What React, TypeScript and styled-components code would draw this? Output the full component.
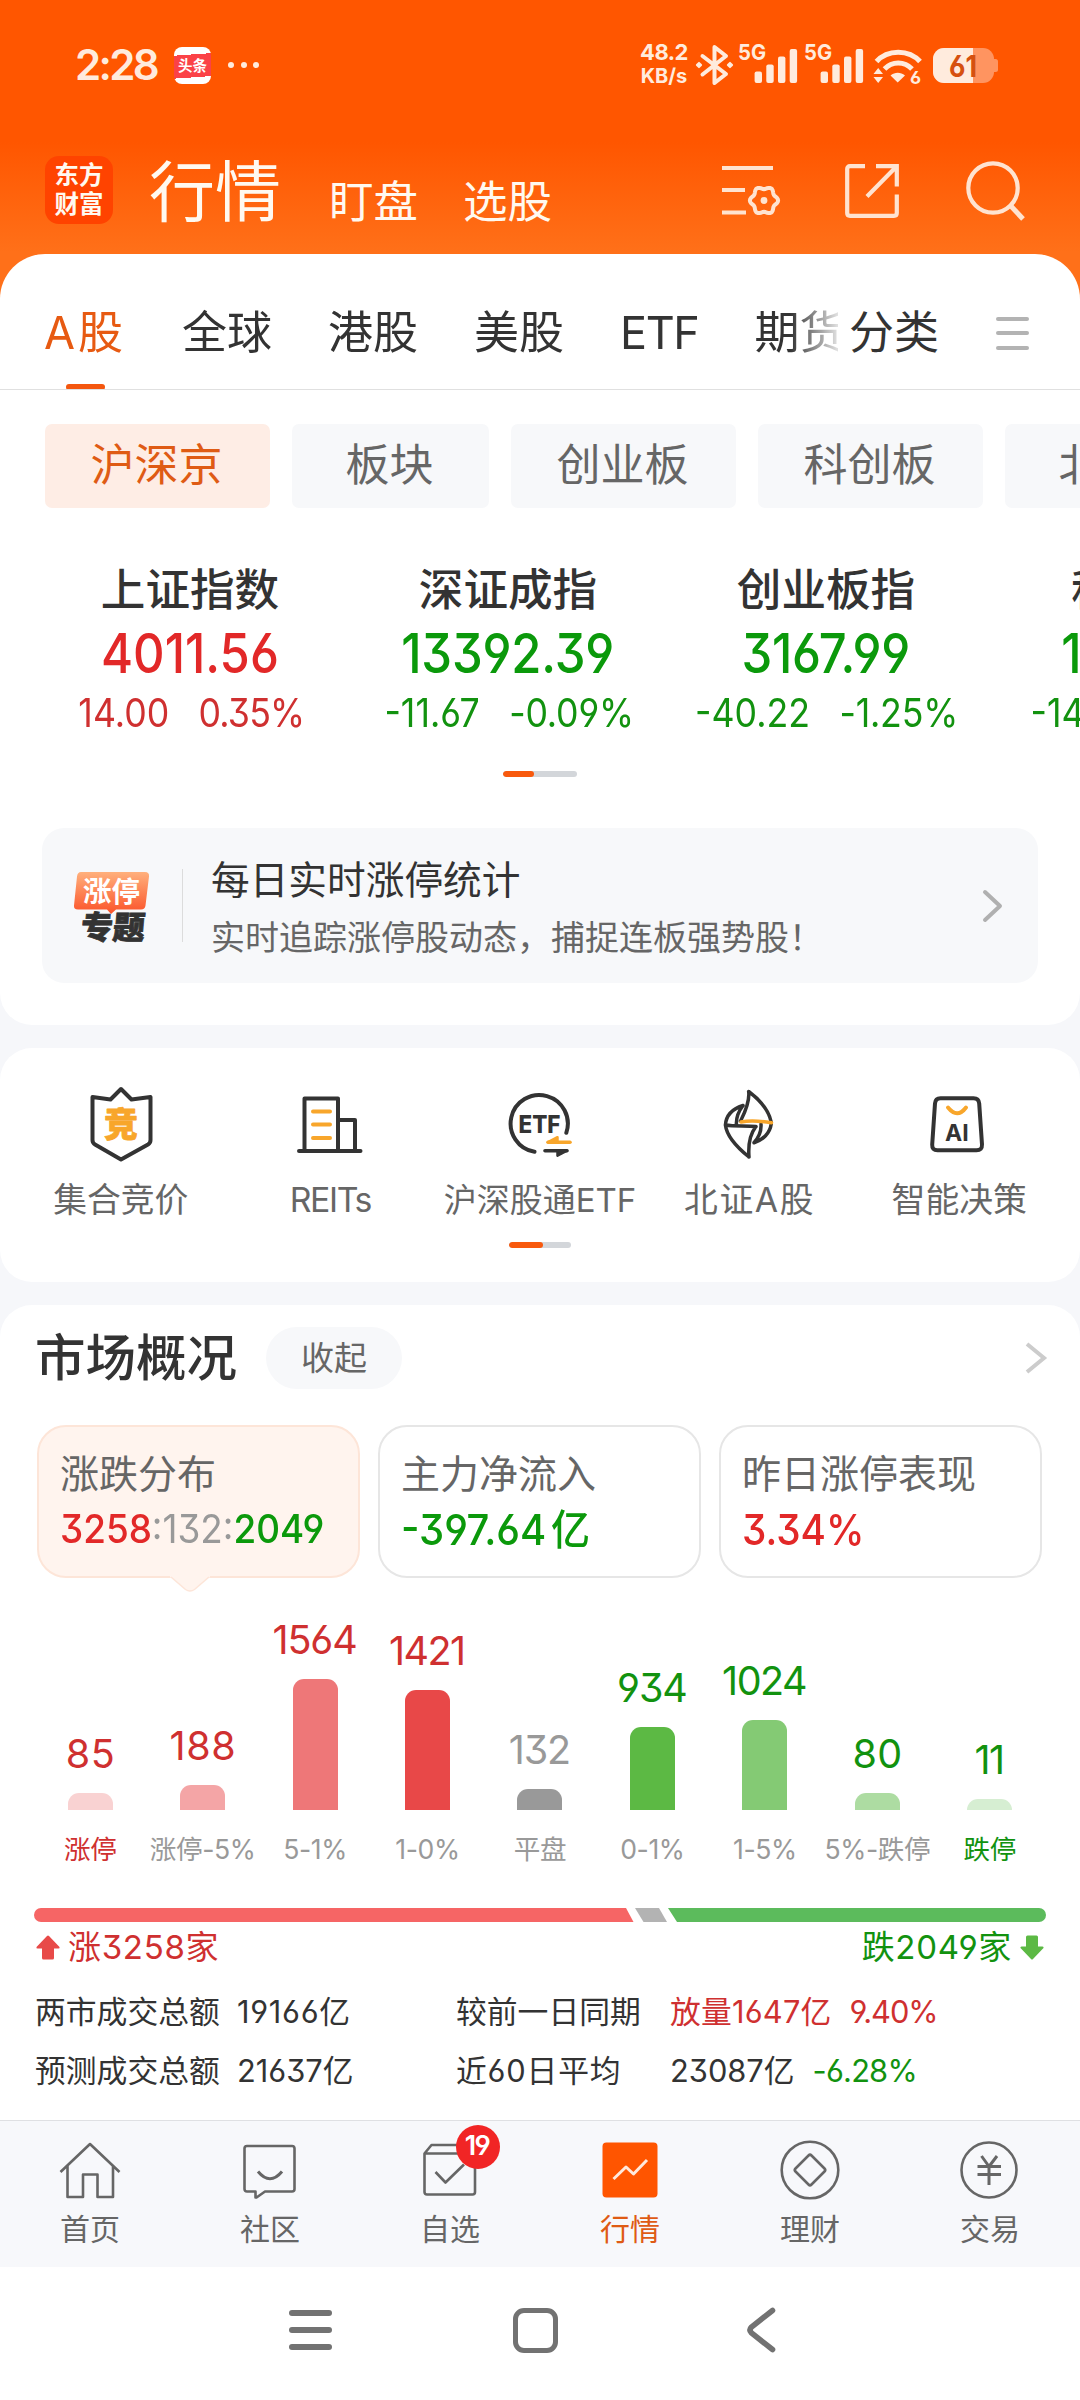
import React from "react";
import styled, { createGlobalStyle, css } from "styled-components";

const c = {
  ink: "#333333",
  sub: "#666666",
  mute: "#999999",
  red: "#e22828",
  redSoft: "#cf3030",
  green: "#0b990b",
  greenSoft: "#12920f",
  brand: "#ff5500",
  brandText: "#e75a12",
  panel: "#ffffff",
  canvas: "#f6f7fa",
  fog: "#f7f8fa",
  cream: "#ffebdd",
};

const GlobalStyle = createGlobalStyle`
  * { box-sizing: border-box; }
  body {
    margin: 0;
    background: ${c.canvas};
    color: ${c.ink};
    font-family: Inter, "Noto Sans CJK SC", sans-serif;
    font-feature-settings: "cv03", "cv04", "cv09";
    white-space: nowrap;
  }
  svg { display: block; flex: none; overflow: visible; }
  svg text { font-family: Inter, "Noto Sans CJK SC", sans-serif; }
`;

const Screen = styled.div`
  width: 1080px;
  height: 2400px;
  overflow: hidden;
  display: flex;
  flex-direction: column;
  background: linear-gradient(#ff5600 0, #ff5600 142px, #ff7019 252px, #ff7019 320px) no-repeat 0 0 / 100% 320px, ${c.canvas};
`;

/* ---------- status bar ---------- */

const StatusBar = styled.div`
  height: 130px;
  flex: none;
  display: flex;
  align-items: center;
  padding: 0 81px 0 75px;
  color: ${c.cream};
`;

const Clock = styled.div`
  font-size: 42px;
  font-weight: 600;
  line-height: 60px;
  letter-spacing: -2.7px;
  width: 99px;
`;

const NewsBadge = styled.div`
  width: 37px;
  height: 37px;
  border-radius: 8px;
  background: linear-gradient(176deg, #fff 0 22%, #fb4247 22% 80%, #fff 80%);
  color: #fff;
  font-size: 14.5px;
  font-weight: 700;
  line-height: 37px;
  text-align: center;
`;

const Dots = styled.div`
  display: flex;
  gap: 6.5px;
  margin-left: 17px;
  & > i { width: 6px; height: 6px; border-radius: 3px; background: ${c.cream}; }
`;

const StatusIcons = styled.div`
  margin-left: auto;
  display: flex;
  align-items: center;
`;

const NetSpeed = styled.div`
  width: 48px;
  text-align: center;
  font-size: 22px;
  font-weight: 700;
  line-height: 24px;
  letter-spacing: -0.5px;
  margin: -2px 8px 0 0;
  & > span { display: block; font-size: 20px; letter-spacing: 0; }
`;

/* ---------- title bar ---------- */

const TitleBar = styled.div`
  height: 124px;
  flex: none;
  display: flex;
  align-items: center;
  padding: 0 55px 0 45px;
  color: #fff9f0;
`;

const Logo = styled.div`
  width: 68px;
  height: 68px;
  margin-top: -4px;
  border-radius: 14px;
  background: #ff4300;
  padding-top: 5px;
  text-align: center;
  font-size: 24.5px;
  font-weight: 700;
  line-height: 29px;
`;

const PageTitle = styled.div`
  font-size: 66px;
  line-height: 100px;
  margin-left: 36px;
`;

const TitleLink = styled.div<{ $gap: number }>`
  font-size: 44.5px;
  line-height: 60px;
  margin: 20px 0 0 ${(p) => p.$gap}px;
`;

const TitleIcons = styled.div`
  margin: -3px 0 0 auto;
  display: flex;
  align-items: center;
`;

/* ---------- panels ---------- */

const Panel = styled.section<{ $h: number; $radius: string }>`
  flex: none;
  height: ${(p) => p.$h}px;
  border-radius: ${(p) => p.$radius};
  background: ${c.panel};
  overflow: hidden;
  & + & { margin-top: 23px; }
`;

const TabRow = styled.div`
  display: flex;
  align-items: center;
  height: 136px;
  padding: 23px 51px 0 0;
  border-bottom: 1px solid #e0e0e0;
  font-size: 45px;
  line-height: 66px;
`;

const TabScroller = styled.div`
  display: flex;
  align-items: center;
  gap: 56px;
  width: 838px;
  height: 112px;
  padding-left: 44px;
  overflow: hidden;
  mask-image: linear-gradient(to right, #000 790px, transparent 846px);
`;

const Tab = styled.div<{ $active?: boolean; $ls?: number }>`
  position: relative;
  flex: none;
  letter-spacing: ${(p) => p.$ls ?? 0}px;
  ${(p) =>
    p.$active &&
    css`
      color: ${c.brandText};
      width: 82px;
      &::after {
        content: "";
        position: absolute;
        left: 22px;
        bottom: -24px;
        width: 39px;
        height: 6px;
        border-radius: 3px;
        background: #f4570f;
      }
    `}
`;

const Classify = styled.div`
  margin-left: 11px;
`;

const MenuLines = styled.div`
  margin-left: auto;
  width: 33px;
  display: grid;
  gap: 10.5px;
  & > i { height: 4px; border-radius: 2px; background: #b3b3b3; }
`;

const ChipRow = styled.div`
  display: flex;
  gap: 22px;
  margin: 34px 0 0 45px;
`;

const Chip = styled.div<{ $active?: boolean }>`
  flex: none;
  height: 84px;
  padding: 0 47.5px 0 45.5px;
  min-width: 197px;
  text-align: center;
  border-radius: 7px;
  font-size: 44px;
  line-height: 83px;
  background: ${(p) => (p.$active ? "#feede5" : c.fog)};
  color: ${(p) => (p.$active ? "#df5b14" : c.sub)};
`;

const IndexRow = styled.div`
  display: flex;
  margin: 49px 0 0 31px;
`;

const IndexCard = styled.div<{ $up?: boolean }>`
  flex: none;
  width: 318px;
  display: flex;
  flex-direction: column;
  align-items: center;
  color: ${(p) => (p.$up ? c.red : c.green)};
`;

const IndexName = styled.div`
  font-size: 44.6px;
  font-weight: 500;
  line-height: 66px;
  height: 64px;
  color: ${c.ink};
`;

const IndexValue = styled.div<{ $ls: number }>`
  font-size: 55px;
  font-weight: 500;
  line-height: 64px;
  letter-spacing: ${(p) => p.$ls}px;
  transform: scaleX(0.89);
`;

const IndexChange = styled.div<{ $up?: boolean }>`
  display: flex;
  gap: 32px;
  margin-left: 2px;
  font-size: 39px;
  line-height: 55px;
  transform: scaleX(0.916);
  color: ${(p) => (p.$up ? c.redSoft : c.greenSoft)};
  & > span:last-child { letter-spacing: ${(p) => (p.$up ? -0.9 : -0.2)}px; }
`;

const Pager = styled.div<{ $top: number; $w: number; $on: number }>`
  width: ${(p) => p.$w}px;
  height: 6px;
  border-radius: 3px;
  margin: ${(p) => p.$top}px auto 0;
  background: #d3d6da;
  overflow: hidden;
  &::before {
    content: "";
    display: block;
    width: ${(p) => p.$on}px;
    height: 6px;
    border-radius: 3px;
    background: #f8590d;
  }
`;

const Banner = styled.div`
  display: flex;
  align-items: center;
  height: 155px;
  margin: 51px 42px 0;
  padding: 0 35px 0 31px;
  border-radius: 22px;
  background: ${c.fog};
`;

const BannerRule = styled.div`
  width: 1px;
  height: 73px;
  margin: 0 28px 0 32px;
  background: #dcdcdc;
`;

const BannerText = styled.div`
  flex: 1;
  padding-top: 8px;
`;

const BannerTitle = styled.div`
  font-size: 38.7px;
  line-height: 56px;
`;

const BannerNote = styled.div`
  font-size: 34px;
  line-height: 59px;
  color: ${c.sub};
`;

/* ---------- shortcuts ---------- */

const ShortcutGrid = styled.div`
  display: grid;
  grid-template-columns: repeat(5, 1fr);
  padding: 36px 16px 0;
`;

const Shortcut = styled.div<{ $size?: number; $ls?: number }>`
  display: flex;
  flex-direction: column;
  align-items: center;
  font-size: ${(p) => p.$size ?? 33.8}px;
  letter-spacing: ${(p) => p.$ls ?? 0}px;
  line-height: 48px;
  gap: 12px;
  color: ${c.sub};
`;

/* ---------- market overview ---------- */

const OverviewHead = styled.div`
  display: flex;
  align-items: center;
  height: 62px;
  margin: 22px 33px 0 35px;
`;

const OverviewTitle = styled.h2`
  margin: 0;
  width: 231px;
  font-size: 50.5px;
  font-weight: 500;
  line-height: 64px;
`;

const FoldButton = styled.div`
  width: 136px;
  height: 62px;
  border-radius: 31px;
  background: ${c.fog};
  color: ${c.sub};
  font-size: 33px;
  line-height: 62px;
  text-align: center;
  margin-right: auto;
`;

const CardRow = styled.div`
  display: grid;
  grid-template-columns: repeat(3, 323px);
  gap: 18px;
  margin: 36px 0 0 37px;
`;

const MetricCard = styled.div<{ $active?: boolean }>`
  position: relative;
  height: 153px;
  border: 2px solid ${(p) => (p.$active ? "#fde5d8" : "#e6e6e6")};
  border-radius: 29px;
  padding: 22px 22px 0 21px;
  background: ${(p) => (p.$active ? "#fff4ee" : "#fff")};
  & > svg { position: absolute; left: 131px; top: 149px; }
`;

const MetricLabel = styled.div`
  font-size: 39px;
  line-height: 50px;
  color: ${c.sub};
`;

const MetricValue = styled.div<{ $color: string; $size: number; $sx: number }>`
  display: inline-block;
  margin-top: 2px;
  font-size: ${(p) => p.$size}px;
  font-weight: 500;
  line-height: 56px;
  color: ${(p) => p.$color};
  transform: scaleX(${(p) => p.$sx});
  transform-origin: 0 50%;
`;

const Flat = styled.span`
  color: ${c.mute};
  font-weight: 400;
`;

const Down = styled.span`
  color: ${c.green};
`;

const Unit = styled.span`
  margin-left: 5px;
  font-size: 42px;
`;

const Histogram = styled.div`
  display: grid;
  grid-template-columns: repeat(9, 112.45px);
  height: 291px;
  margin-left: 34px;
`;

const BarColumn = styled.div<{ $color: string }>`
  display: flex;
  flex-direction: column;
  justify-content: flex-end;
  align-items: center;
  color: ${(p) => p.$color};
`;

const BarCount = styled.div<{ $ls: number }>`
  font-size: 39.5px;
  line-height: 40px;
  letter-spacing: ${(p) => p.$ls}px;
  margin-right: ${(p) => -p.$ls}px;
`;

const Bar = styled.div<{ $fill: string }>`
  width: 45px;
  margin-top: 19px;
  border-radius: 11px 11px 0 0;
  background: ${(p) => p.$fill};
`;

const BarLabel = styled.div<{ $strong?: boolean }>`
  margin-top: 19px;
  font-size: 26.6px;
  letter-spacing: -0.4px;
  line-height: 40px;
  color: ${(p) => (p.$strong ? "inherit" : c.mute)};
`;

const Balance = styled.div`
  margin: 39px 0 0 34px;
`;

const Totals = styled.div`
  display: flex;
  justify-content: space-between;
  height: 50px;
  margin: 0 36px;
  font-size: 33px;
  letter-spacing: 0.7px;
  line-height: 50px;
`;

const Side = styled.div<{ $color: string }>`
  display: flex;
  align-items: center;
  gap: 8px;
  color: ${(p) => p.$color};
`;

const Stats = styled.div`
  display: grid;
  grid-template-columns: 202px 219px 214px 1fr;
  grid-auto-rows: 58.5px;
  margin: 11px 0 0 35px;
  font-size: 30.8px;
  line-height: 58px;
`;

const StatLabel = styled.div<{ $ls?: number }>`
  letter-spacing: ${(p) => p.$ls ?? 0}px;
`;

const StatValue = styled.div<{ $color?: string; $ls?: number }>`
  display: flex;
  gap: 18px;
  letter-spacing: ${(p) => p.$ls ?? 0}px;
  color: ${(p) => p.$color ?? c.ink};
`;

const Percent = styled.span<{ $color: string; $ls: number }>`
  color: ${(p) => p.$color};
  letter-spacing: ${(p) => p.$ls}px;
`;

/* ---------- bottom bars ---------- */

const TabBar = styled.nav`
  flex: none;
  display: grid;
  grid-template-columns: repeat(6, 1fr);
  height: 147px;
  border-top: 1px solid #dfe0e3;
  background: #f7f8fb;
`;

const NavItem = styled.div<{ $active?: boolean }>`
  position: relative;
  display: flex;
  flex-direction: column;
  align-items: center;
  gap: 11px;
  padding-top: 19px;
  font-size: 30px;
  line-height: 36px;
  color: ${(p) => (p.$active ? "#df5b14" : c.sub)};
`;

const Badge = styled.div`
  position: absolute;
  left: 96px;
  top: 4px;
  width: 44px;
  height: 44px;
  border-radius: 22px;
  background: #f12525;
  color: #fff;
  font-size: 27px;
  font-weight: 600;
  letter-spacing: -1.5px;
  line-height: 42px;
  padding-right: 2px;
  text-align: center;
`;

const SystemNav = styled.div`
  flex: none;
  display: flex;
  align-items: center;
  height: 133px;
  padding: 0 0 7px 289px;
  background: #fff;
`;

const RecentLines = styled.div`
  width: 43px;
  display: grid;
  gap: 11px;
  & > i { height: 6px; border-radius: 3px; background: #727272; }
`;

const HomeSquare = styled.div`
  width: 45px;
  height: 45px;
  margin: 0 189px 0 181px;
  border: 5.5px solid #727272;
  border-radius: 11px;
`;

/* ---------- drawings ---------- */

const Bluetooth = () => (
  <svg width="37" height="42" viewBox="0 0 37 42" fill="none" stroke={c.cream} strokeWidth="4" strokeLinecap="round" strokeLinejoin="round">
    <path d="M6.5 12 30 30 18.5 39V3L30 12 6.5 30.5" />
    <g fill={c.cream} stroke="none">
      <rect x="0.5" y="18.5" width="5" height="5" rx="1" transform="rotate(45 3 21)" />
      <rect x="31.5" y="18.5" width="5" height="5" rx="1" transform="rotate(45 34 21)" />
    </g>
  </svg>
);

const SignalSvg = styled.svg<{ $ml: number }>`
  margin-left: ${(p) => p.$ml}px;
`;

const Signal = ({ ml }: { ml: number }) => (
  <SignalSvg $ml={ml} width="60" height="42" viewBox="0 0 60 42" fill={c.cream}>
    <text x="0" y="16" fontSize="22" fontWeight="700" textLength="28" lengthAdjust="spacingAndGlyphs">5G</text>
    {[27.5, 20.5, 12.5, 5].map((y, i) => (
      <rect key={y} x={16.6 + i * 11.7} y={y} width="7.4" height={39 - y} rx="2" />
    ))}
  </SignalSvg>
);

const WifiSvg = styled.svg`
  margin-left: 9px;
`;

const Wifi = () => (
  <WifiSvg width="50" height="42" viewBox="0 0 50 42" fill="none" stroke={c.cream} strokeWidth="5">
    <path d="M3.5 17.5C14.5 5 36 5 47 17.5M11.5 25C19 17 31.5 17 39 25" />
    <g fill={c.cream} stroke="none">
      <path d="M17.5 31.5c4.5-3.6 10-3.6 14.5 0L24.7 38.5zM5.2 24 10 30H.5zM.5 33H10l-4.8 6z" />
      <text x="37" y="40" fontSize="18" fontWeight="700">6</text>
    </g>
  </WifiSvg>
);

const BatterySvg = styled.svg`
  margin-left: 10px;
`;

const Battery = () => (
  <BatterySvg width="66" height="35" viewBox="0 0 66 35">
    <rect width="61" height="35" rx="11" fill="#ff9460" />
    <path d="M11 0H40V35H11A11 11 0 0 1 0 24V11A11 11 0 0 1 11 0Z" fill={c.cream} />
    <path d="M61 11h1.5q2.500 0 2.500 2.500v8q0 2.500-2.500 2.500H61z" fill="#ff9460" />
    <text x="16" y="28.500" fontSize="30" fontWeight="700" fill="#d6500f" textLength="28" lengthAdjust="spacingAndGlyphs">61</text>
  </BatterySvg>
);

const gearPath =
  Array.from({ length: 73 }, (_, i) => {
    const a = (i * 5 * Math.PI) / 180;
    const r = 12.7 + 1.4 * Math.cos(6 * a);
    return `${i ? "L" : "M"}${(42 + r * Math.cos(a)).toFixed(2)} ${(37.5 + r * Math.sin(a)).toFixed(2)}`;
  }).join("") + "Z";

const HeaderIcon = styled.svg<{ $gap?: number }>`
  margin-left: ${(p) => p.$gap ?? 0}px;
  fill: none;
  stroke: #ffe3d0;
  stroke-width: 4.2px;
`;

const ListGear = () => (
  <HeaderIcon width="60" height="56" viewBox="0 0 60 56">
    <path d="M0 5H51M0 27H23M0 49.500H24" />
    <path d={gearPath} strokeWidth="4" strokeLinejoin="round" />
    <circle cx="42" cy="37.500" r="3.400" fill="#ffe3d0" stroke="none" />
  </HeaderIcon>
);

const ShareOut = () => (
  <HeaderIcon $gap={63} width="54" height="54" viewBox="0 0 54 54">
    <path d="M20 2.200H5Q2.200 2.200 2.200 5V49Q2.200 51.800 5 51.800H49Q51.800 51.800 51.800 49V30.500M31 2.200H51.800V22.500M51 3 22 32.500" />
  </HeaderIcon>
);

const Search = () => (
  <HeaderIcon $gap={67} width="59" height="59" viewBox="0 0 59 59">
    <circle cx="27" cy="27" r="24.700" />
    <path d="M44 44 57 58" strokeWidth="5" />
  </HeaderIcon>
);

const Chevron = ({ color, w, round }: { color: string; w: number; round?: boolean }) => (
  <svg width={w} height="34" viewBox={`0 0 ${w} 34`} fill="none" stroke={color} strokeWidth="4" strokeLinecap={round ? "round" : "butt"} strokeLinejoin={round ? "round" : "miter"}>
    <path d={`M2 3 ${w - 3} 17 2 31`} />
  </svg>
);

const TopicMark = () => (
  <svg width="77" height="72" viewBox="0 0 77 72">
    <defs>
      <linearGradient id="topic" x1="0" y1="0" x2="0" y2="1">
        <stop offset="0" stopColor="#ffb07c" />
        <stop offset="1" stopColor="#fb5329" />
      </linearGradient>
    </defs>
    <path d="M8 2H72Q76.500 2 76 6.500L72.500 35.500Q72 39.500 68 39.500H43L38 44 34 39.500H5Q.5 39.500 1 35.500L4 6.500Q4.500 2 8 2Z" fill="url(#topic)" />
    <text x="10" y="31.500" fontSize="28.500" fontWeight="700" fill="#fff">涨停</text>
    <text x="13" y="69.500" fontSize="32" fontWeight="900" fill={c.ink} stroke={c.ink} strokeWidth="0.8" transform="skewX(-5)">专题</text>
  </svg>
);

const ShortcutIcon = styled.svg.attrs({ width: 80, height: 80, viewBox: "0 0 80 80" })`
  fill: none;
  stroke: ${c.ink};
  stroke-width: 4px;
  stroke-linecap: round;
  stroke-linejoin: round;
`;

const amber = "#f8a62b";

const AuctionIcon = () => (
  <ShortcutIcon>
    <path d="M11.500 13 29.500 15.500 40 5 50.500 15.500 69.500 13V56Q69.500 59 67 60.500L40 75.500 14 60.500Q11.500 59 11.500 56Z" />
    <text x="23" y="53" fontSize="34" fontWeight="900" fill={amber} stroke={amber} strokeWidth="0.8">竞</text>
  </ShortcutIcon>
);

const ReitsIcon = () => (
  <ShortcutIcon>
    <path d="M9 67H70.500M14.500 67V14.500H48V67M48 36H65V67" />
    <path d="M23 27.500H40M23 40.500H40M23 54H40" stroke={amber} />
  </ShortcutIcon>
);

const EtfIcon = () => (
  <ShortcutIcon>
    <path d="M66.300 48.800A28.600 28.600 0 1 0 34.500 67.800" />
    <text x="18.500" y="49" fontSize="24" fontWeight="800" fill={c.ink} stroke="none" textLength="42" lengthAdjust="spacingAndGlyphs">ETF</text>
    <g strokeWidth="3.600">
      <path d="M70 58.200H48" stroke={amber} />
      <path d="M57.500 53.200V58.200H48Z" stroke={amber} fill={amber} strokeWidth="2.500" />
      <path d="M45 66.700H67" />
      <path d="M57.500 71.700V66.700H67Z" fill={c.ink} strokeWidth="2.500" />
    </g>
  </ShortcutIcon>
);

const NorthIcon = () => (
  <ShortcutIcon>
    <g strokeWidth="3.500">
      <path d="M38.700 7.500C50 16 59 27 61.200 38M38.700 7.500C40 19 34 30 30.500 37M33 21.500C22 25 16 32 15.400 41M33 21.500C28 28 26 33 26.400 40.500M15.400 41C25 42.500 35 41.500 46 42.500M46 42.500C40 50 38 60 39 73M15.400 41C17 54 29 65 39 73M61.200 40C60 49 53 56 44 58.700 49 53 51.500 47 51 40" />
      <path d="M31 38C41 36 51 37 61.500 38.800" stroke={amber} />
    </g>
  </ShortcutIcon>
);

const AiIcon = () => (
  <ShortcutIcon>
    <path d="M21.500 14.200H54.500Q59.800 14.200 60.200 19.500L63 60.500Q63.300 66.200 57.500 66.200H18.500Q12.900 66.200 13.200 60.500L16 19.500Q16.400 14.200 21.500 14.200Z" />
    <path d="M29 23.500Q38.300 35 47 23.500" stroke={amber} />
    <text x="26" y="57" fontSize="23" fontWeight="700" fill={c.ink} stroke="none">AI</text>
  </ShortcutIcon>
);

const CardTail = () => (
  <svg width="40" height="17" viewBox="0 0 40 17">
    <path d="M0 0V1.500H2L15.500 13.500Q20 16.500 24.500 13.500L38 1.500H40V0Z" fill="#fff4ee" />
    <path d="M1 1 15.500 13.500Q20 16.500 24.500 13.500L39 1" fill="none" stroke="#fde5d8" strokeWidth="1.500" />
  </svg>
);

const ArrowMark = ({ down }: { down?: boolean }) => (
  <svg width="24" height="25" viewBox="0 0 24 25" fill={down ? "#5cb944" : "#e84a48"}>
    <path
      d="M11 1Q12 0 13 1L23.500 12Q24 13.500 22.500 13.500H18V23Q18 24.500 16.500 24.500H7.500Q6 24.500 6 23V13.500H1.500Q0 13.500.5 12Z"
      transform={down ? "rotate(180 12 12.500)" : undefined}
    />
  </svg>
);

const BalanceBar = () => (
  <svg width="1012" height="14" viewBox="0 0 1012 14">
    <path d="M7 0H592L599.500 14H7A7 7 0 0 1 7 0Z" fill="#f66565" />
    <path d="M601 0H625L633 14H609.500Z" fill="#b3b3b3" />
    <path d="M634 0H1005A7 7 0 0 1 1005 14H643Z" fill="#5cbb5c" />
  </svg>
);

const NavIcon = styled.svg.attrs({ width: 60, height: 60, viewBox: "0 0 60 60" })`
  fill: none;
  stroke: ${c.sub};
  stroke-width: 2.6px;
  stroke-linejoin: round;
`;

const BackArrow = () => (
  <svg width="29" height="46" viewBox="0 0 29 46" fill="none" stroke="#727272" strokeWidth="5.600" strokeLinecap="round">
    <path d="M25.500 3.500 4.500 20Q1.500 23 4.500 26L25.500 42.500" />
  </svg>
);

/* ---------- data ---------- */

const indices = [
  { name: "上证指数", value: "4011.56", diff: "14.00", pct: "0.35%", up: true, ls: 0 },
  { name: "深证成指", value: "13392.39", diff: "-11.67", pct: "-0.09%", ls: -0.2 },
  { name: "创业板指", value: "3167.99", diff: "-40.22", pct: "-1.25%", ls: -0.3 },
  { name: "科创50", value: "1411.83", diff: "-14.11", pct: "-1.01%", ls: -0.2 },
];

const bars = [
  { n: "85", h: 17, label: "涨停", fill: "#f9d2d2", color: c.redSoft, ls: 0.7, strong: true },
  { n: "188", h: 25, label: "涨停-5%", fill: "#f4a5a6", color: c.redSoft, ls: 0.6 },
  { n: "1564", h: 131, label: "5-1%", fill: "#ee7778", color: c.redSoft, ls: -1.1 },
  { n: "1421", h: 120.5, label: "1-0%", fill: "#e84848", color: c.redSoft, ls: -1.5 },
  { n: "132", h: 21, label: "平盘", fill: "#999999", color: c.mute, ls: -1.1 },
  { n: "934", h: 83, label: "0-1%", fill: "#5cb944", color: c.greenSoft, ls: -1.2 },
  { n: "1024", h: 90, label: "1-5%", fill: "#84ca74", color: c.greenSoft, ls: -1.5 },
  { n: "80", h: 17, label: "5%-跌停", fill: "#addca2", color: c.greenSoft, ls: 0.3 },
  { n: "11", h: 11.5, label: "跌停", fill: "#d6eed2", color: c.greenSoft, ls: -1.6, strong: true },
];

export default function App() {
  return (
    <Screen>
      <GlobalStyle />
      <StatusBar>
        <Clock>2:28</Clock>
        <NewsBadge>头条</NewsBadge>
        <Dots><i /><i /><i /></Dots>
        <StatusIcons>
          <NetSpeed>48.2<span>KB/s</span></NetSpeed>
          <Bluetooth />
          <Signal ml={5} />
          <Signal ml={6} />
          <Wifi />
          <Battery />
        </StatusIcons>
      </StatusBar>

      <TitleBar>
        <Logo>东方<br />财富</Logo>
        <PageTitle>行情</PageTitle>
        <TitleLink $gap={48}>盯盘</TitleLink>
        <TitleLink $gap={45}>选股</TitleLink>
        <TitleIcons>
          <ListGear />
          <ShareOut />
          <Search />
        </TitleIcons>
      </TitleBar>

      <Panel $h={771} $radius="45px 45px 32px 32px">
        <TabRow>
          <TabScroller>
            <Tab $active $ls={3}>A股</Tab>
            <Tab>全球</Tab>
            <Tab>港股</Tab>
            <Tab>美股</Tab>
            <Tab $ls={-1.4}>ETF</Tab>
            <Tab>期货</Tab>
          </TabScroller>
          <Classify>分类</Classify>
          <MenuLines><i /><i /><i /></MenuLines>
        </TabRow>
        <ChipRow>
          <Chip $active>沪深京</Chip>
          <Chip>板块</Chip>
          <Chip>创业板</Chip>
          <Chip>科创板</Chip>
          <Chip>北证</Chip>
        </ChipRow>
        <IndexRow>
          {indices.map((it) => (
            <IndexCard key={it.name} $up={it.up}>
              <IndexName>{it.name}</IndexName>
              <IndexValue $ls={it.ls}>{it.value}</IndexValue>
              <IndexChange $up={it.up}><span>{it.diff}</span><span>{it.pct}</span></IndexChange>
            </IndexCard>
          ))}
        </IndexRow>
        <Pager $top={31} $w={74} $on={31} />
        <Banner>
          <TopicMark />
          <BannerRule />
          <BannerText>
            <BannerTitle>每日实时涨停统计</BannerTitle>
            <BannerNote>实时追踪涨停股动态，捕捉连板强势股！</BannerNote>
          </BannerText>
          <Chevron color="#b0b0b0" w={20} round />
        </Banner>
      </Panel>

      <Panel $h={234} $radius="32px">
        <ShortcutGrid>
          <Shortcut><AuctionIcon />集合竞价</Shortcut>
          <Shortcut $ls={-1.4}><ReitsIcon />REITs</Shortcut>
          <Shortcut $size={33}><EtfIcon />沪深股通ETF</Shortcut>
          <Shortcut $ls={1.6}><NorthIcon />北证A股</Shortcut>
          <Shortcut><AiIcon />智能决策</Shortcut>
        </ShortcutGrid>
        <Pager $top={18} $w={62} $on={34} />
      </Panel>

      <Panel $h={815} $radius="32px 32px 0 0">
        <OverviewHead>
          <OverviewTitle>市场概况</OverviewTitle>
          <FoldButton>收起</FoldButton>
          <Chevron color="#cccccc" w={22} />
        </OverviewHead>
        <CardRow>
          <MetricCard $active>
            <MetricLabel>涨跌分布</MetricLabel>
            <MetricValue $color={c.red} $size={39} $sx={0.945}>
              3258<Flat>:132:</Flat><Down>2049</Down>
            </MetricValue>
            <CardTail />
          </MetricCard>
          <MetricCard>
            <MetricLabel>主力净流入</MetricLabel>
            <MetricValue $color={c.green} $size={43} $sx={0.93}>-397.64<Unit>亿</Unit></MetricValue>
          </MetricCard>
          <MetricCard>
            <MetricLabel>昨日涨停表现</MetricLabel>
            <MetricValue $color={c.red} $size={43} $sx={0.9}>3.34%</MetricValue>
          </MetricCard>
        </CardRow>
        <Histogram>
          {bars.map((b) => (
            <BarColumn key={b.label} $color={b.color}>
              <BarCount $ls={b.ls}>{b.n}</BarCount>
              <Bar $fill={b.fill} style={{ height: b.h }} />
              <BarLabel $strong={b.strong}>{b.label}</BarLabel>
            </BarColumn>
          ))}
        </Histogram>
        <Balance><BalanceBar /></Balance>
        <Totals>
          <Side $color={c.redSoft}><ArrowMark />涨3258家</Side>
          <Side $color={c.greenSoft}>跌2049家<ArrowMark down /></Side>
        </Totals>
        <Stats>
          <StatLabel>两市成交总额</StatLabel>
          <StatValue $ls={0.7}>19166亿</StatValue>
          <StatLabel>较前一日同期</StatLabel>
          <StatValue $color={c.redSoft} $ls={0.2}>放量1647亿<Percent $color={c.redSoft} $ls={-1.1}>9.40%</Percent></StatValue>
          <StatLabel>预测成交总额</StatLabel>
          <StatValue>21637亿</StatValue>
          <StatLabel $ls={0.8}>近60日平均</StatLabel>
          <StatValue>23087亿<Percent $color={c.greenSoft} $ls={-0.8}>-6.28%</Percent></StatValue>
        </Stats>
      </Panel>

      <TabBar>
        <NavItem>
          <NavIcon><path d="M.5 32 30 4 59.500 32M7.500 26V57H23V34.500H37.500V57H53V26" /></NavIcon>
          首页
        </NavItem>
        <NavItem>
          <NavIcon>
            <path d="M7 6H52Q54.500 6 54.500 8.500V49Q54.500 51.500 52 51.500H25L16.500 57.500H15.500V51.500H7Q4.500 51.500 4.500 49V8.500Q4.500 6 7 6Z" />
            <path d="M18 31.500Q30 46 42 31.500" strokeWidth="3" />
          </NavIcon>
          社区
        </NavItem>
        <NavItem>
          <NavIcon>
            <path d="M4.500 13.500H55V52Q55 54.500 52.500 54.500H7Q4.500 54.500 4.500 52V13.500L11.500 5H48L55 13.500" />
            <path d="M15.500 32 25.500 42.500 44 24.500" />
          </NavIcon>
          自选
          <Badge>19</Badge>
        </NavItem>
        <NavItem $active>
          <NavIcon>
            <rect x="2.500" y="2.500" width="55" height="55" rx="4" fill={c.brand} stroke="none" />
            <path d="M13.500 39 26 27 33.500 34 47 20" stroke="#ffe9dc" strokeWidth="3" />
          </NavIcon>
          行情
        </NavItem>
        <NavItem>
          <NavIcon>
            <circle cx="30" cy="30" r="28.300" />
            <path d="M28.500 15.500Q30 14 31.500 15.500L44.500 28.500Q46 30 44.500 31.500L31.500 44.500Q30 46 28.500 44.500L15.500 31.500Q14 30 15.500 28.500Z" />
          </NavIcon>
          理财
        </NavItem>
        <NavItem>
          <NavIcon>
            <circle cx="29" cy="30" r="27.500" />
            <path d="M21.500 16 29 26.500 37 16M17.500 26.500H41M17.500 34.500H41M29 26.500V45" strokeWidth="3" />
          </NavIcon>
          交易
        </NavItem>
      </TabBar>

      <SystemNav>
        <RecentLines><i /><i /><i /></RecentLines>
        <HomeSquare />
        <BackArrow />
      </SystemNav>
    </Screen>
  );
}
